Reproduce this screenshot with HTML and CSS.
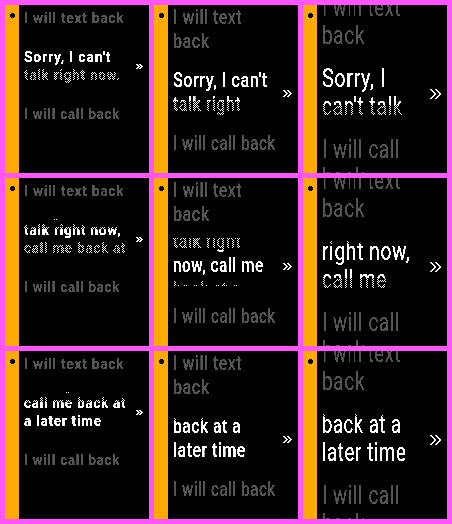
FILE: index.html
```html
<!DOCTYPE html>
<html lang="en">
<head>
<meta charset="utf-8">
<title>Quick replies</title>
<link rel="stylesheet" href="styles.css">
</head>
<body>
<svg class="defs" width="0" height="0"><filter id="crisp" x="0" y="0" width="1" height="1" color-interpolation-filters="sRGB"><feComponentTransfer><feFuncA type="linear" slope="14" intercept="-5.2"/></feComponentTransfer></filter></svg>
<main class="grid" id="grid"></main>
<script src="app.js"></script>
</body>
</html>
```
FILE: styles.css
```css
* { box-sizing: border-box; }
body { margin: 0; background: #ff55ff; font-family: Roboto, "Liberation Sans", sans-serif; }
.defs { position: absolute; }
.grid { display: grid; grid-template-columns: repeat(3, 144px); grid-auto-rows: 168px; gap: 5px; padding: 5px; width: 452px; height: 524px; }
.panel { display: flex; background: #000; overflow: hidden; }
.bar { flex: 0 0 14px; background: #ffaa00; padding: 8px 0 0 5px; }
.dot, .arrow { display: block; shape-rendering: crispEdges; }
.list { flex: 0 0 112px; padding-left: 5px; display: flex; flex-direction: column; }
.side { flex: 1; min-width: 0; }
.item { flex: none; color: #555; }
.active { color: #fff; }
.line { position: relative; white-space: pre; filter: url(#crisp); width: 107px; }
.text { display: inline-block; transform-origin: 0 50%; }

.small .list { gap: 21px; padding-top: 4px; }
.small .line { font-size: 15.5px; font-weight: 700; line-height: 18px; height: 18px; }
.small .text { letter-spacing: 0.9px; }
.small .arrow { margin: 59px 0 0 5px; }
.medium .list { gap: 15px; padding-top: 1px; }
.medium .line { font-size: 19.7px; font-weight: 500; line-height: 24px; height: 24px; }
.medium .text { letter-spacing: 0.6px; }
.medium .arrow { margin: 85px 0 0 3px; }
.large .list { gap: 15px; margin-top: -11px; }
.large .line { font-size: 25.3px; font-weight: 400; line-height: 28px; height: 28px; }
.large .text { letter-spacing: 0.8px; }
.large .arrow { margin: 84px 0 0 1px; }

/* scrolled text, cut off above and below its window */
.scrolled { height: 48px; margin: -4px 0 4px; overflow: hidden; }
.scrolled .line:first-child { margin-top: -8px; }

.dither::after { content: ""; position: absolute; left: 0; right: 0; top: var(--from); height: var(--size); background: conic-gradient(#000 25%, transparent 0 50%, #000 0 75%, transparent 0) 0 0 / 2px 2px; }
.speck { position: absolute; top: -2px; width: 3px; height: 1px; background: linear-gradient(90deg, #fff 1px, #000 1px 2px, #fff 2px); }
.speck-a { left: 30px; }
.speck-b { left: 42px; }
```
FILE: app.js
```js
// Each line: [text, width, ditherStart, ditherHeight]
const sizes = {
  small: { before: [["I will text back", 98]], after: [["I will call back", 94]] },
  medium: { before: [["I will text", 67], ["back", 35]], after: [["I will call back", 101]] },
  large: { before: [["I will text", 77], ["back", 41]], after: [["I will call", 76], ["back", 41]] }
};
const panels = [
  { size: "small", lines: [["Sorry, I can't", 85], ["talk right now.", 95, 0, 18]] },
  { size: "medium", lines: [["Sorry, I can't", 93], ["talk right", 66, 8, 18]] },
  { size: "large", lines: [["Sorry, I", 62], ["can't talk", 79, 12, 16]] },
  { size: "small", speck: "speck-a", lines: [["talk right now,", 95, 0, 8], ["call me back at", 100, 0, 18]] },
  { size: "medium", scrolled: true, lines: [["talk right", 66, 0, 20], ["now, call me", 89], ["back at a", 66, 0, 24]] },
  { size: "large", lines: [["right now,", 86, 0, 6], ["call me", 63, 12, 16]] },
  { size: "small", speck: "speck-b", lines: [["call me back at", 100, 0, 8], ["a later time", 76]] },
  { size: "medium", lines: [["back at a", 66, 0, 6], ["later time", 71]] },
  { size: "large", lines: [["back at a", 78, 0, 6], ["later time", 82]] }
];

// Double chevron built from 2px-wide steps: [height, distance between chevrons]
const arrows = { small: [5, 3], medium: [7, 4], large: [10, 5] };
function arrow(size) {
  const [h, step] = arrows[size];
  let d = "", w = 0;
  for (let y = 0; y < h; y++) {
    const x = Math.min(y, h - 1 - y);
    d += `M${x} ${y}h2v1h-2zM${x + step} ${y}h2v1h-2z`;
    w = Math.max(w, x + step + 2);
  }
  return `<svg class="arrow" width="${w}" height="${h}"><path d="${d}" fill="#fff"/></svg>`;
}

function line([text, width, from, size]) {
  const d = size ? ` dither" style="--from:${from}px;--size:${size}px` : "";
  return `<div class="line${d}"><span class="text" data-width="${width}">${text}</span></div>`;
}
function item(lines, cls = "") {
  return `<div class="item ${cls}">${lines.map(line).join("")}</div>`;
}
document.getElementById("grid").innerHTML = panels.map(p => {
  const s = sizes[p.size];
  const speck = p.speck ? `<i class="speck ${p.speck}"></i>` : "";
  return `<section class="panel ${p.size}">
    <div class="bar"><svg class="dot" width="5" height="5"><path d="M1 0H4V1H5V4H4V5H1V4H0V1H1Z"/></svg></div>
    <div class="list">${item(s.before)}<div class="item active${p.scrolled ? " scrolled" : ""}" ${p.speck ? 'style="position:relative"' : ""}>${speck}${p.lines.map(line).join("")}</div>${item(s.after)}</div>
    <div class="side">${arrow(p.size)}</div>
  </section>`;
}).join("");

// Condense every line to its set width
document.querySelectorAll(".text").forEach(t => {
  t.style.transform = `scaleX(${(Number(t.dataset.width) + 2) / t.offsetWidth})`;
});
```
